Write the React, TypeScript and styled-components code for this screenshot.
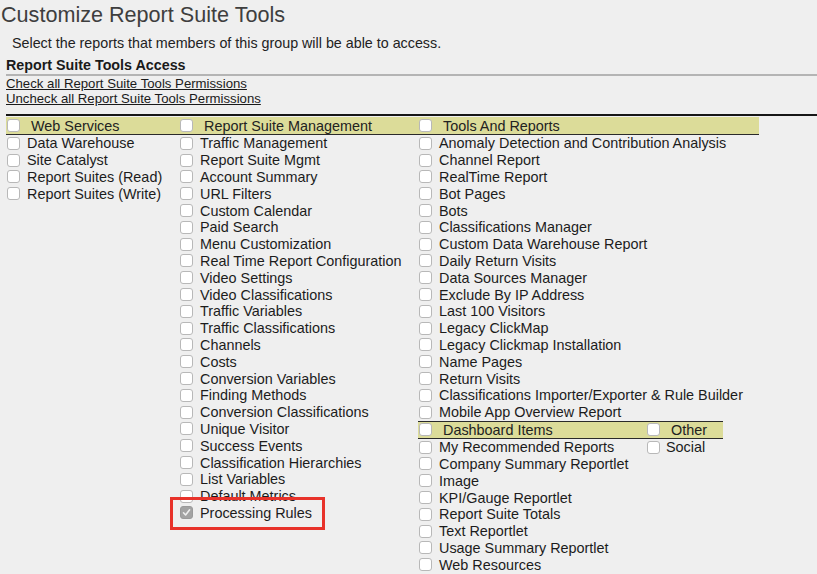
import styled, { createGlobalStyle } from "styled-components";

const GlobalStyle = createGlobalStyle`
  html, body {
    margin: 0;
    padding: 0;
    background: #efefef;
  }
  body {
    font-family: "Liberation Sans", Arial, sans-serif;
    color: #1c1c1c;
    overflow: hidden;
  }
`;

const Page = styled.div`
  width: 817px;
  height: 574px;
  overflow: hidden;
`;

const Title = styled.h1`
  margin: 0;
  padding-left: 1px;
  font-size: 21.6px;
  font-weight: normal;
  line-height: 30px;
  color: #3e3e3e;
`;

const Intro = styled.p`
  margin: 4px 0 0 12px;
  font-size: 14.3px;
  line-height: 18px;
  color: #222;
`;

const Section = styled.div`
  margin-left: 6px;
`;

const SectionTitle = styled.div`
  margin-top: 5px;
  font-size: 14.3px;
  font-weight: bold;
  line-height: 17px;
  color: #1a1a1a;
  border-bottom: 2px solid #b4b4b4;
`;

const Links = styled.div`
  display: flex;
  flex-direction: column;
`;

const Link = styled.a`
  font-size: 13.2px;
  line-height: 15px;
  color: #1a1a1a;
  text-decoration: underline;
  cursor: pointer;
`;

const Grid = styled.div`
  margin-top: 8px;
  border-top: 2px solid #161616;
  padding-top: 1px;
  display: flex;
  align-items: flex-start;
`;

const Column = styled.div<{ $width: number }>`
  width: ${({ $width }) => $width}px;
  flex: none;
`;

const Header = styled.div<{ $boxed?: boolean }>`
  height: ${({ $boxed }) => ($boxed ? 16.2 : 17)}px;
  display: flex;
  align-items: center;
  background: #dcdc99;
  border-bottom: 1px solid #2a2a2a;
  border-top: ${({ $boxed }) => ($boxed ? "1px solid #2a2a2a" : "none")};
  font-size: 14.4px;
  color: #222;
`;

const HeaderLabel = styled.span`
  margin-left: 11px;
  white-space: nowrap;
`;

const Row = styled.div`
  position: relative;
  height: 16.8px;
  display: flex;
  align-items: center;
  font-size: 14.4px;
  white-space: nowrap;
`;

const RowLabel = styled.span<{ $gap?: number }>`
  margin-left: ${({ $gap }) => $gap ?? 7}px;
`;

const Box = styled.span<{ $checked?: boolean }>`
  width: 13px;
  height: 13px;
  margin-left: 1px;
  flex: none;
  box-sizing: border-box;
  border-radius: 3px;
  border: 1px solid ${({ $checked }) => ($checked ? "#9a9a9a" : "#b8b8b8")};
  background: ${({ $checked }) => ($checked ? "#a3a3a3" : "#fff")};
  display: flex;
  align-items: center;
  justify-content: center;
`;

const Highlight = styled.div`
  position: absolute;
  left: -9px;
  top: -8px;
  width: 155px;
  height: 33px;
  box-sizing: border-box;
  border: 3px solid #e8322a;
  pointer-events: none;
`;

const SubGroup = styled.div`
  width: 305px;
  display: flex;
  align-items: flex-start;
`;

const Check = ({ checked }: { checked?: boolean }) => (
  <Box $checked={checked}>
    {checked && (
      <svg width="9" height="9" viewBox="0 0 9 9">
        <path d="M1.5 4.8 L3.6 7 L7.6 1.8" fill="none" stroke="#eeeeee" strokeWidth="1.6" strokeLinecap="round" strokeLinejoin="round" />
      </svg>
    )}
  </Box>
);

const webServices = ["Data Warehouse", "Site Catalyst", "Report Suites (Read)", "Report Suites (Write)"];

const suiteManagement = [
  "Traffic Management",
  "Report Suite Mgmt",
  "Account Summary",
  "URL Filters",
  "Custom Calendar",
  "Paid Search",
  "Menu Customization",
  "Real Time Report Configuration",
  "Video Settings",
  "Video Classifications",
  "Traffic Variables",
  "Traffic Classifications",
  "Channels",
  "Costs",
  "Conversion Variables",
  "Finding Methods",
  "Conversion Classifications",
  "Unique Visitor",
  "Success Events",
  "Classification Hierarchies",
  "List Variables",
  "Default Metrics",
];

const toolsAndReports = [
  "Anomaly Detection and Contribution Analysis",
  "Channel Report",
  "RealTime Report",
  "Bot Pages",
  "Bots",
  "Classifications Manager",
  "Custom Data Warehouse Report",
  "Daily Return Visits",
  "Data Sources Manager",
  "Exclude By IP Address",
  "Last 100 Visitors",
  "Legacy ClickMap",
  "Legacy Clickmap Installation",
  "Name Pages",
  "Return Visits",
  "Classifications Importer/Exporter & Rule Builder",
  "Mobile App Overview Report",
];

const dashboardItems = [
  "My Recommended Reports",
  "Company Summary Reportlet",
  "Image",
  "KPI/Gauge Reportlet",
  "Report Suite Totals",
  "Text Reportlet",
  "Usage Summary Reportlet",
  "Web Resources",
];

const Item = ({ label, gap }: { label: string; gap?: number }) => (
  <Row>
    <Check />
    <RowLabel $gap={gap}>{label}</RowLabel>
  </Row>
);

const GroupHeader = ({ label, boxed }: { label: string; boxed?: boolean }) => (
  <Header $boxed={boxed}>
    <Check />
    <HeaderLabel>{label}</HeaderLabel>
  </Header>
);

export default function App() {
  return (
    <Page>
      <GlobalStyle />
      <Title>Customize Report Suite Tools</Title>
      <Intro>Select the reports that members of this group will be able to access.</Intro>
      <Section>
        <SectionTitle>Report Suite Tools Access</SectionTitle>
        <Links>
          <Link>Check all Report Suite Tools Permissions</Link>
          <Link>Uncheck all Report Suite Tools Permissions</Link>
        </Links>
        <Grid>
          <Column $width={173}>
            <GroupHeader label="Web Services" />
            {webServices.map((l) => (
              <Item key={l} label={l} />
            ))}
          </Column>
          <Column $width={239}>
            <GroupHeader label="Report Suite Management" />
            {suiteManagement.map((l) => (
              <Item key={l} label={l} />
            ))}
            <Row>
              <Check checked />
              <RowLabel>Processing Rules</RowLabel>
              <Highlight />
            </Row>
          </Column>
          <Column $width={341}>
            <GroupHeader label="Tools And Reports" />
            {toolsAndReports.map((l) => (
              <Item key={l} label={l} />
            ))}
            <SubGroup>
              <Column $width={228}>
                <GroupHeader label="Dashboard Items" boxed />
                {dashboardItems.map((l) => (
                  <Item key={l} label={l} />
                ))}
              </Column>
              <Column $width={77}>
                <GroupHeader label="Other" boxed />
                <Item label="Social" gap={6} />
              </Column>
            </SubGroup>
          </Column>
        </Grid>
      </Section>
    </Page>
  );
}
